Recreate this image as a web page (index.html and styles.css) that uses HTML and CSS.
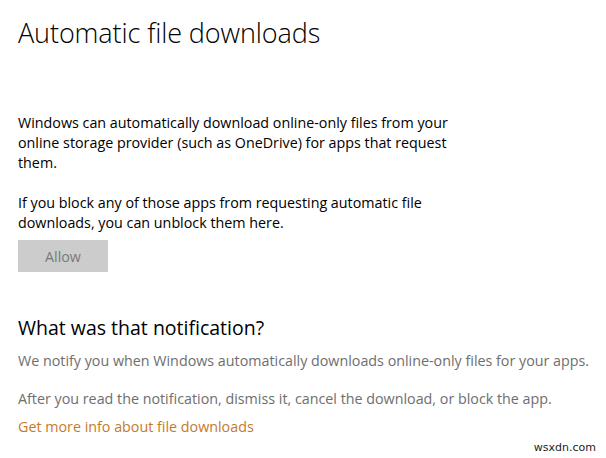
FILE: index.html
```html
<!DOCTYPE html>
<html>
<head>
<meta charset="utf-8">
<link rel="stylesheet" href="styles.css">
</head>
<body>
<main class="page">
  <h1 class="title">Automatic file downloads</h1>
  <p class="text first">Windows can automatically download online-only files from your online storage provider (such as OneDrive) for apps that request them.</p>
  <p class="text">If you block any of those apps from requesting automatic file downloads, you can unblock them here.</p>
  <button class="btn" disabled>Allow</button>
  <h2 class="subtitle">What was that notification?</h2>
  <p class="muted">We notify you when Windows automatically downloads online-only files for your apps.</p>
  <p class="muted gap">After you read the notification, dismiss it, cancel the download, or block the app.</p>
  <a class="link" href="#">Get more info about file downloads</a>
</main>
<div class="watermark">wsxdn.com</div>
</body>
</html>
```
FILE: styles.css
```css
html, body {
  margin: 0;
  background: #fff;
}
body {
  width: 606px;
  height: 458px;
  overflow: hidden;
  font-family: "Open Sans", "Noto Sans", sans-serif;
  color: #000;
}
.page {
  padding: 14px 0 0 18px;
  display: flex;
  flex-direction: column;
  align-items: flex-start;
}
.title {
  margin: 0;
  font-size: 27px;
  font-weight: 300;
  line-height: 38px;
  letter-spacing: -0.1px;
}
.text {
  margin: 0;
  width: 448px;
  font-size: 14.3px;
  line-height: 20px;
}
.text.first {
  margin-top: 61px;
}
.text + .text {
  margin-top: 20px;
}
.btn {
  margin-top: 7px;
  width: 90px;
  height: 32px;
  border: 0;
  background: #cccccc;
  color: #7a7a7a;
  font-family: inherit;
  font-size: 14.3px;
  padding: 0;
}
.subtitle {
  margin: 43px 0 0;
  font-size: 19.5px;
  font-weight: 400;
  line-height: 26px;
}
.muted {
  margin: 10px 0 0;
  color: #6e6e6e;
  font-size: 14.3px;
  line-height: 20px;
}
.muted.gap {
  margin-top: 18px;
}
.link {
  margin-top: 8px;
  color: #c47a2c;
  text-decoration: none;
  font-size: 14.3px;
  line-height: 20px;
}
.watermark {
  position: absolute;
  right: 10px;
  bottom: 4px;
  font-family: "DejaVu Sans", sans-serif;
  font-size: 11px;
  color: #222;
}
```
